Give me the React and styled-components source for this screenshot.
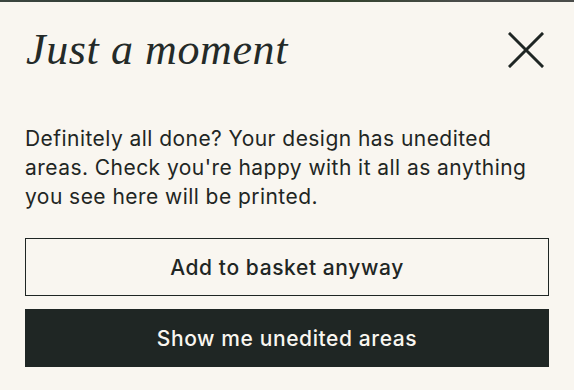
import React from 'react';
import styled, { createGlobalStyle } from 'styled-components';

const GlobalStyle = createGlobalStyle`
    html, body {
        margin: 0;
        padding: 0;
        background: #f9f6f0;
    }
    * {
        box-sizing: border-box;
    }
`;

const Strip = styled.div`
    height: 2px;
    background: linear-gradient(90deg, #3c4640 0%, #2c3a30 30%, #34432f 60%, #4a4d4a 80%, #4a4d4a 100%);
`;

const Dialog = styled.div`
    background: #f9f6f0;
    color: #1f2624;
    padding: 0 25px 0 25px;
    height: 388px;
`;

const Header = styled.div`
    display: flex;
    justify-content: space-between;
    align-items: center;
    padding-top: 24px;
`;

const Title = styled.h1`
    margin: 0 0 0 1px;
    font-family: "Liberation Serif", serif;
    font-style: italic;
    font-weight: 400;
    font-size: 44px;
    line-height: 48px;
    letter-spacing: 0.6px;
    color: #242a28;
`;

const CloseButton = styled.button`
    border: none;
    background: none;
    padding: 0;
    margin-right: 4px;
    width: 38px;
    height: 38px;
    display: flex;
    align-items: center;
    justify-content: center;
    cursor: pointer;
    color: #1f2624;
`;

const Message = styled.p`
    margin: 50px 0 0 0;
    font-family: Inter, sans-serif;
    font-size: 21px;
    line-height: 29px;
    letter-spacing: 0.45px;
`;

const Actions = styled.div`
    display: flex;
    flex-direction: column;
    gap: 13px;
    margin-top: 27px;
`;

const ActionButton = styled.button`
    height: 58px;
    width: 100%;
    font-family: Inter, sans-serif;
    font-size: 21px;
    font-weight: 500;
    letter-spacing: 0.6px;
    border: 1px solid #1f2624;
    background: ${props => props.primary ? '#1f2624' : 'transparent'};
    color: ${props => props.primary ? '#f9f6f0' : '#1f2624'};
    cursor: pointer;
`;

const App = () => {
    return (
        <>
            <GlobalStyle />
            <Strip />
            <Dialog>
                <Header>
                    <Title>Just a moment</Title>
                    <CloseButton aria-label="Close">
                        <svg width="36" height="36" viewBox="0 0 36 36">
                            <path d="M2 2 L34 34 M34 2 L2 34" stroke="currentColor" strokeWidth="3" strokeLinecap="square" />
                        </svg>
                    </CloseButton>
                </Header>
                <Message>
                    Definitely all done? Your design has unedited areas. Check you're happy with it all as anything you see here will be printed.
                </Message>
                <Actions>
                    <ActionButton>Add to basket anyway</ActionButton>
                    <ActionButton primary>Show me unedited areas</ActionButton>
                </Actions>
            </Dialog>
        </>
    )
}

export default App;
